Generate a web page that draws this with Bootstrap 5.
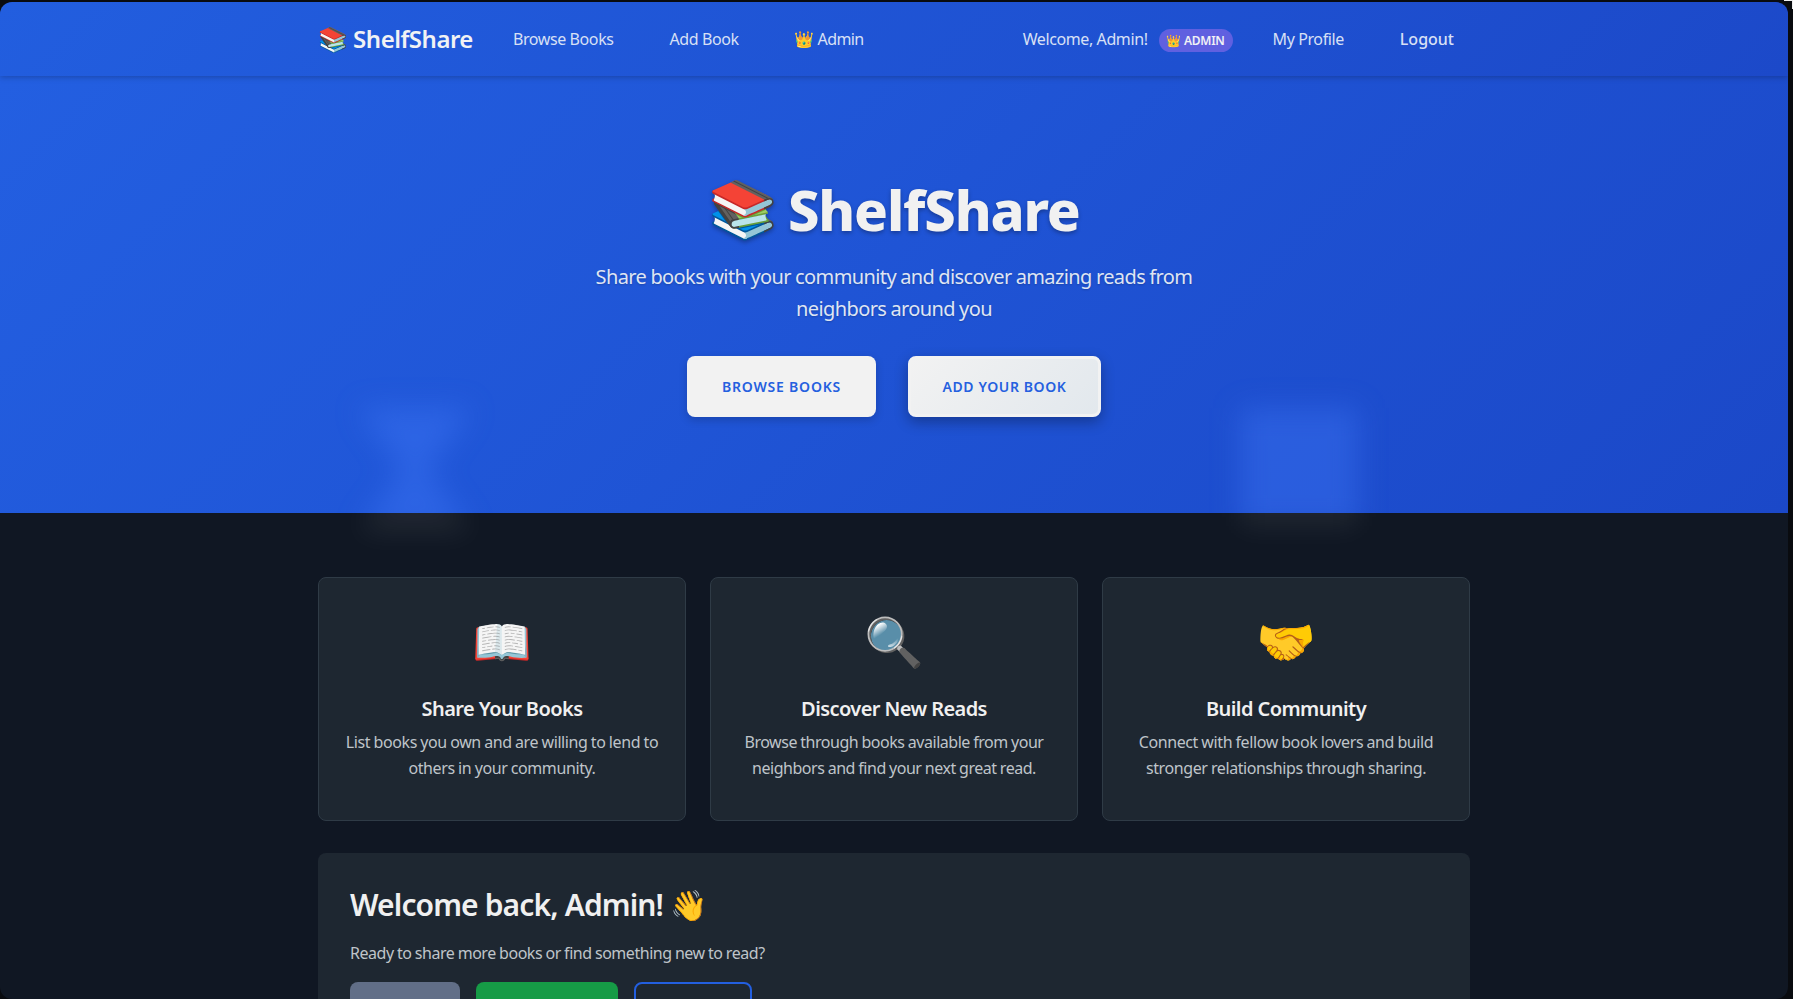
<!DOCTYPE html>
<html lang="en">
<head>
<meta charset="utf-8">
<meta name="viewport" content="width=device-width, initial-scale=1">
<title>ShelfShare</title>
<link href="https://cdn.jsdelivr.net/npm/bootstrap@5.3.0/dist/css/bootstrap.min.css" rel="stylesheet">
<style>
html,body{height:100%;overflow:hidden}
body{background:#090b0f;font-family:"Noto Sans","Noto Color Emoji",sans-serif;font-size:16px;color:#eee;padding:2px 5px 0 0}
.app-window{height:997px;border-radius:12px;background:#101723;overflow:hidden;position:relative}
.corner-mark{position:absolute;top:0;right:0;width:9px;height:9px;border-top:1px solid #eee;border-right:1px solid #eee}
.shell{width:1152px;margin:0 auto}
.topbar{height:74px;background:linear-gradient(135deg,#225edf,#1c49c9);box-shadow:0 1px 6px rgba(0,0,0,.25);position:relative;z-index:2;padding:0}
.topbar a{color:#d8e0f5;text-decoration:none;white-space:nowrap;letter-spacing:-.4px}
.topbar .brand-link{color:#f1f2f4;font-size:24px;font-weight:600;letter-spacing:-.5px}
.topbar .crown-link{letter-spacing:-.62px}
.topbar .logout-link{letter-spacing:0;font-weight:500}
.role-pill{background:#6060e0;border-radius:12px;font-size:12px;font-weight:600;color:#f1f1f5;width:74px;height:23px;line-height:23px;text-align:center;white-space:nowrap;letter-spacing:-.3px;margin-top:2px}
.hero{height:437px;background:linear-gradient(135deg,#235fe1,#1b48c8);padding-top:100px;text-align:center;position:relative;overflow:hidden}
.hero h1{font-size:56px;font-weight:800;line-height:67px;margin:0 0 18px;color:#f1f1f1;text-shadow:0 2px 4px rgba(0,0,0,.3);letter-spacing:-1.15px;word-spacing:-2.5px}
.hero h1 span{position:relative;top:-2px}
.hero p{font-size:20px;line-height:32px;color:#dfe5f3;width:640px;margin:0 auto 31px;text-shadow:0 1px 2px rgba(0,0,0,.2);letter-spacing:-.6px;word-spacing:-.5px}
.cta{height:61px;border-radius:8px;background:#f2f2f2;border:0;color:#2560df;font-size:14px;font-weight:600;letter-spacing:.8px;box-shadow:0 3px 8px rgba(0,0,0,.18);padding:0}
.cta-main{width:189px}
.cta-alt{width:193px;letter-spacing:.6px;background:linear-gradient(135deg,#f2f2f2,#e2e8ed);border:3px solid #f2f2f2;box-shadow:0 5px 14px rgba(0,0,0,.3)}
.lower{position:relative;padding-top:64px}
.glow{position:absolute;filter:blur(14px);pointer-events:none;overflow:visible;top:332px;color:rgba(72,128,255,.32)}
.lower .glow{top:-105px;color:rgba(255,255,255,.065)}
.lower-clip{position:absolute;inset:0;overflow:hidden;pointer-events:none}
.glow-glass{left:358px;width:114px;height:124px}
.glow-box{left:1240px;width:118px;height:118px;background:currentColor}
.feature{height:244px;width:368px;background:#1e2731;border:1px solid #2f3b46;border-radius:8px;padding:29px 23px 0;text-align:center;color:#bfc4c9}
.feature .emo{font-size:48px;line-height:68px;height:68px}
.feature h3{font-size:20px;font-weight:600;line-height:26px;color:#f0f0f0;margin:21px 0 7px;letter-spacing:-.58px}
.feature p{line-height:26px;margin:0;white-space:nowrap;letter-spacing:-.4px;word-spacing:-.4px}
.feature .tight{letter-spacing:-.47px}
.welcome{height:240px;background:#1e2731;border-radius:8px;padding:32px}
.welcome h2{font-size:30px;font-weight:600;line-height:40px;margin:0 0 15px;color:#f0f0f0;letter-spacing:-.88px}
.welcome p{line-height:26px;margin:0 0 16px;color:#bfc4c9;letter-spacing:-.46px;word-spacing:-.4px}
.act{height:50px;border-radius:8px}
</style>
</head>
<body>
<div class="corner-mark"></div>
<div class="app-window">
<nav class="topbar navbar"><div class="shell d-flex align-items-center">
<a class="brand-link" href="#">📚 ShelfShare</a>
<a href="#" style="margin-left:40px">Browse Books</a>
<a href="#" style="margin-left:56px">Add Book</a>
<a class="crown-link" href="#" style="margin-left:56px">👑 Admin</a>
<a class="ms-auto" href="#">Welcome, Admin!</a>
<span class="role-pill" style="margin-left:11px">👑 ADMIN</span>
<a href="#" style="margin-left:40px">My Profile</a>
<a class="logout-link" href="#" style="margin-left:56px;margin-right:16px">Logout</a>
</div></nav>
<header class="hero">
<svg class="glow glow-glass" viewBox="0 0 114 124"><path d="M0 0H114L70 62L114 124H0L44 62Z" fill="currentColor"/></svg>
<div class="glow glow-box"></div>
<h1><span>📚</span> ShelfShare</h1>
<p>Share books with your community and discover amazing reads from neighbors around you</p>
<div class="d-flex justify-content-center" style="gap:32px"><button class="btn cta cta-main">BROWSE BOOKS</button><button class="btn cta cta-alt">ADD YOUR BOOK</button></div>
</header>
<div class="lower">
<div class="lower-clip">
<svg class="glow glow-glass" viewBox="0 0 114 124"><path d="M0 0H114L70 62L114 124H0L44 62Z" fill="currentColor"/></svg>
<div class="glow glow-box"></div>
</div>
<main class="shell position-relative">
<section class="d-flex justify-content-between">
<article class="feature"><div class="emo">📖</div><h3>Share Your Books</h3><p>List books you own and are willing to lend to<br>others in your community.</p></article>
<article class="feature"><div class="emo">🔍</div><h3>Discover New Reads</h3><p class="tight">Browse through books available from your<br>neighbors and find your next great read.</p></article>
<article class="feature"><div class="emo">🤝</div><h3>Build Community</h3><p>Connect with fellow book lovers and build<br>stronger relationships through sharing.</p></article>
</section>
<section class="welcome" style="margin-top:32px"><h2>Welcome back, Admin! 👋</h2><p>Ready to share more books or find something new to read?</p>
<div class="d-flex gap-3"><div class="act" style="width:110px;background:#616e87"></div><div class="act" style="width:142px;background:#169b46"></div><div class="act" style="width:118px;border:2px solid #235fe0"></div></div>
</section>
</main>
</div>
</div>
<script src="https://cdn.jsdelivr.net/npm/bootstrap@5.3.0/dist/js/bootstrap.bundle.min.js"></script>
</body>
</html>
